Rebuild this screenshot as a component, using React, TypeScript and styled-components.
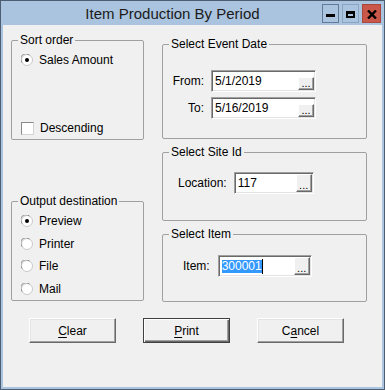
import React from "react";
import styled, { createGlobalStyle } from "styled-components";

const GlobalStyle = createGlobalStyle`
  html, body {
    margin: 0;
    padding: 0;
    background: #ffffff;
  }
  body {
    font-family: "Liberation Sans", Arial, sans-serif;
    font-size: 12px;
    color: #000;
  }
`;

export default function App() {
  return (
    <>
      <GlobalStyle />
      <Window>
        <TitleBar>
          <Title>Item Production By Period</Title>
          <CaptionButtons>
            <CaptionButton $kind="min">
              <svg width="9" height="4" viewBox="0 0 9 4">
                <rect x="0" y="0" width="9" height="3" fill="#000" />
              </svg>
            </CaptionButton>
            <CaptionButton $kind="max">
              <svg width="9" height="7" viewBox="0 0 9 7">
                <path d="M0 0H9V7H0Z M2 3V5H7V3Z" fill="#000" fillRule="evenodd" />
              </svg>
            </CaptionButton>
            <CaptionButton $kind="close">
              <svg width="10" height="9" viewBox="0 0 10 9">
                <path d="M1 0.5L9 8.5M9 0.5L1 8.5" stroke="#000" strokeWidth="2.4" />
              </svg>
            </CaptionButton>
          </CaptionButtons>
        </TitleBar>

        <Client>
          <Body>
            <LeftColumn>
              <SortGroup>
                <Legend>Sort order</Legend>
                <Option>
                  <Radio checked />
                  Sales Amount
                </Option>
                <Option>
                  <CheckBox />
                  Descending
                </Option>
              </SortGroup>

              <OutputGroup>
                <Legend>Output destination</Legend>
                <Option>
                  <Radio checked />
                  Preview
                </Option>
                <Option>
                  <Radio />
                  Printer
                </Option>
                <Option>
                  <Radio />
                  File
                </Option>
                <Option>
                  <Radio />
                  Mail
                </Option>
              </OutputGroup>
            </LeftColumn>

            <RightColumn>
              <DateGroup>
                <Legend>Select Event Date</Legend>
                <FieldRow>
                  <DateLabel>From:</DateLabel>
                  <TextBox $width={105}>
                    <Value>5/1/2019</Value>
                    <Ellipsis $tall={false}>...</Ellipsis>
                  </TextBox>
                </FieldRow>
                <FieldRow>
                  <DateLabel>To:</DateLabel>
                  <TextBox $width={105}>
                    <Value>5/16/2019</Value>
                    <Ellipsis $tall={false}>...</Ellipsis>
                  </TextBox>
                </FieldRow>
              </DateGroup>

              <SmallGroup $indent={15}>
                <Legend>Select Site Id</Legend>
                <FieldRow $gap={7}>
                  <Label>Location:</Label>
                  <TextBox $width={80}>
                    <Value>117</Value>
                    <Ellipsis $tall>...</Ellipsis>
                  </TextBox>
                </FieldRow>
              </SmallGroup>

              <SmallGroup $indent={20} $top={20}>
                <Legend>Select Item</Legend>
                <FieldRow $gap={8}>
                  <Label>Item:</Label>
                  <TextBox $width={94}>
                    <Value>
                      <Selected>300001</Selected>
                      <Caret />
                    </Value>
                    <Ellipsis $tall>...</Ellipsis>
                  </TextBox>
                </FieldRow>
              </SmallGroup>
            </RightColumn>
          </Body>

          <ButtonRow>
            <PushButton>
              <u>C</u>lear
            </PushButton>
            <PushButton $default>
              <u>P</u>rint
            </PushButton>
            <PushButton>
              C<u>a</u>ncel
            </PushButton>
          </ButtonRow>
        </Client>
      </Window>
    </>
  );
}

function Radio({ checked = false }: { checked?: boolean }) {
  return (
    <Indicator>
      <svg width="12" height="12" viewBox="0 0 12 12">
        <circle cx="6" cy="6" r="5.5" fill="#fff" stroke="#c8c8c8" />
        <path d="M1.2 8.5A5 5 0 0 1 8.5 1.2" fill="none" stroke="#8a8a8a" />
        {checked && <circle cx="6" cy="6" r="2" fill="#000" />}
      </svg>
    </Indicator>
  );
}

const Window = styled.div`
  width: 385px;
  height: 390px;
  box-sizing: border-box;
  border: 1px solid #4d5e72;
  background: #aac3de;
  display: flex;
  flex-direction: column;
`;

const TitleBar = styled.div`
  height: 24px;
  display: flex;
  align-items: flex-start;
`;

const Title = styled.div`
  flex: 1;
  text-align: center;
  padding-left: 22px;
  font-size: 15px;
  line-height: 25px;
  color: #1b1b1b;
`;

const CaptionButtons = styled.div`
  display: flex;
  gap: 3px;
  margin-top: 3px;
  margin-right: 3px;
`;

const CaptionButton = styled.div<{ $kind: "min" | "max" | "close" }>`
  box-sizing: border-box;
  width: ${(p) => (p.$kind === "close" ? 19 : 17)}px;
  height: 19px;
  display: flex;
  align-items: center;
  justify-content: center;
  padding-top: ${(p) => (p.$kind === "min" ? 5 : 1)}px;
  background: ${(p) => (p.$kind === "close" ? "#c9584a" : "#aac3de")};
  border: 1px solid
    ${(p) =>
      p.$kind === "close" ? "#a8473b" : p.$kind === "min" ? "#62799a" : "#8ba4c2"};
`;

const Client = styled.div`
  flex: 1;
  margin: 0 2px 2px 2px;
  background: #f0f0f0;
  display: flex;
  flex-direction: column;
`;

const Body = styled.div`
  display: flex;
  gap: 18px;
  padding-left: 8px;
`;

const LeftColumn = styled.div`
  width: 133px;
  padding-top: 15px;
  display: flex;
  flex-direction: column;
  gap: 61px;
`;

const RightColumn = styled.div`
  width: 205px;
  padding-top: 19px;
  display: flex;
  flex-direction: column;
  gap: 13px;
`;

const Group = styled.div`
  position: relative;
  box-sizing: border-box;
  border: 1px solid #a0a0a0;
  border-radius: 2px;
`;

const Legend = styled.span`
  position: absolute;
  top: -8px;
  left: 6px;
  padding: 0 2px;
  background: #f0f0f0;
  line-height: 14px;
  white-space: nowrap;
`;

const SortGroup = styled(Group)`
  height: 100px;
  padding: 11px 0 3px 9px;
  display: flex;
  flex-direction: column;
  justify-content: space-between;
`;

const OutputGroup = styled(Group)`
  height: 100px;
  padding: 11px 0 0 9px;
  display: flex;
  flex-direction: column;
  gap: 6.5px;
`;

const Option = styled.div`
  height: 16px;
  display: flex;
  align-items: center;
  gap: 6px;
  line-height: 16px;
`;

const Indicator = styled.span`
  width: 12px;
  height: 12px;
  display: flex;
`;

const CheckBox = styled.span`
  box-sizing: border-box;
  width: 13px;
  height: 13px;
  background: #fff;
  border: 1px solid;
  border-color: #8a8a8a #d4d4d4 #d4d4d4 #8a8a8a;
`;

const DateGroup = styled(Group)`
  height: 95px;
  padding: 25px 0 0 0;
  display: flex;
  flex-direction: column;
  gap: 5px;
`;

const SmallGroup = styled(Group)<{ $indent: number; $top?: number }>`
  height: ${(p) => (p.$top ? 68 : 69)}px;
  padding: ${(p) => p.$top ?? 19}px 0 0 ${(p) => p.$indent}px;
`;

const FieldRow = styled.div<{ $gap?: number }>`
  display: flex;
  align-items: center;
  gap: ${(p) => p.$gap ?? 7}px;
`;

const Label = styled.span`
  line-height: 16px;
  white-space: nowrap;
`;

const DateLabel = styled(Label)`
  width: 41px;
  text-align: right;
`;

const TextBox = styled.div<{ $width: number }>`
  position: relative;
  box-sizing: border-box;
  width: ${(p) => p.$width}px;
  height: 22px;
  background: #fff;
  border: 1px solid;
  border-color: #a0a0a0 #ffffff #ffffff #a0a0a0;
  box-shadow: inset 1px 1px 0 #696969, inset -1px -1px 0 #e3e3e3;
  display: flex;
  align-items: center;
  padding-left: 3px;
`;

const Value = styled.span`
  flex: 1;
  display: flex;
  align-items: center;
  line-height: 14px;
  white-space: nowrap;
`;

const Selected = styled.span`
  background: #3399ff;
  color: #fff;
  line-height: 13px;
`;

const Caret = styled.span`
  width: 1px;
  height: 15px;
  background: #000;
`;

const Ellipsis = styled.div<{ $tall: boolean }>`
  box-sizing: border-box;
  align-self: flex-end;
  width: 16px;
  height: ${(p) => (p.$tall ? 18 : 13)}px;
  margin: 0 1px ${(p) => (p.$tall ? 1 : 1)}px 0;
  background: #f0f0f0;
  border: 1px solid;
  border-color: #ffffff #696969 #696969 #ffffff;
  box-shadow: inset -1px -1px 0 #a0a0a0;
  font-size: 11px;
  line-height: 10px;
  text-align: center;
  display: flex;
  align-items: flex-end;
  justify-content: center;
  padding-bottom: 1px;
`;

const ButtonRow = styled.div`
  display: flex;
  gap: 27px;
  padding-left: 26px;
  margin-top: 16px;
`;

const PushButton = styled.button<{ $default?: boolean }>`
  box-sizing: border-box;
  width: 87px;
  height: 25px;
  padding: 0;
  font-family: inherit;
  font-size: 12px;
  color: #000;
  background: #f0f0f0;
  border: 1px solid;
  border-color: ${(p) =>
    p.$default ? "#404040" : "#ffffff #696969 #696969 #ffffff"};
  box-shadow: ${(p) =>
    p.$default
      ? "inset 1px 1px 0 #ffffff, inset -1px -1px 0 #696969, inset -2px -2px 0 #a0a0a0"
      : "inset -1px -1px 0 #a0a0a0, inset 1px 1px 0 #e3e3e3"};

  u {
    text-decoration-thickness: 1px;
    text-underline-offset: 2px;
  }
`;
